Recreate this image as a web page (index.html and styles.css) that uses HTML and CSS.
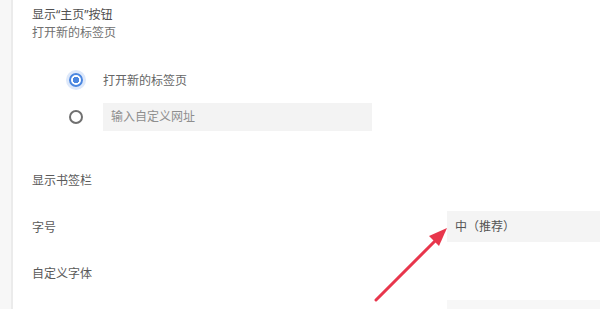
FILE: index.html
```html
<!DOCTYPE html>
<html lang="zh">
<head>
<meta charset="utf-8">
<link rel="stylesheet" href="styles.css">
</head>
<body>
<div class="page">
  <div class="gutter"></div>
  <div class="rail"></div>
  <main class="content">
    <section class="block">
      <div class="title">显示“主页”按钮</div>
      <div class="sub">打开新的标签页</div>
    </section>
    <div class="radios">
      <label class="radio-row">
        <span class="radio checked"></span>
        <span class="radio-label">打开新的标签页</span>
      </label>
      <label class="radio-row">
        <span class="radio"></span>
        <span class="input">输入自定义网址</span>
      </label>
    </div>
    <div class="row bookmarks">显示书签栏</div>
    <div class="row select-row">
      <span>字号</span>
      <span class="select">中（推荐）</span>
    </div>
    <div class="row select-row fontrow">
      <span>自定义字体</span>
    </div>
    <div class="row select-row lastrow">
      <span></span>
      <span class="select light"></span>
    </div>
  </main>
</div>
<svg class="arrow" width="615" height="309" viewBox="0 0 615 309">
  <line x1="376" y1="300" x2="436" y2="240" stroke="#e8364c" stroke-width="3" stroke-linecap="round"/>
  <polygon points="447,228 429,236 439,246" fill="#e8364c"/>
</svg>
</body>
</html>
```

FILE: styles.css
```css
html, body {
  margin: 0;
  padding: 0;
  background: #ffffff;
}
body {
  width: 615px;
  height: 309px;
  overflow: hidden;
  position: relative;
  font-family: "Noto Sans", "Noto Sans CJK SC", sans-serif;
  font-size: 12px;
  color: #5a5a5a;
}
.page {
  display: flex;
  height: 309px;
  overflow: hidden;
}
.gutter {
  width: 11px;
  background: #f7f7f7;
}
.rail {
  width: 2px;
  background: #ebebeb;
}
.content {
  flex: 1;
  padding-left: 19px;
  padding-top: 7px;
  box-sizing: border-box;
  overflow: hidden;
}
.title, .sub {
  line-height: 16px;
  height: 16px;
}
.title {
  color: #505050;
}
.sub {
  margin-top: 2px;
  color: #707070;
}
.radios {
  margin-top: 25px;
  display: flex;
  flex-direction: column;
  gap: 9px;
}
.radio-row {
  display: flex;
  align-items: center;
  height: 28px;
  padding-left: 37px;
}
.radio {
  width: 10px;
  height: 10px;
  border: 2px solid #707070;
  border-radius: 50%;
  box-sizing: content-box;
  margin-right: 20px;
  flex: none;
}
.radio.checked {
  border-color: #4a86e0;
  background: radial-gradient(circle, #4a86e0 0 3px, #ffffff 3.5px);
  box-shadow: 0 0 0 3px #dde8fa;
}
.radio-label {
  color: #666666;
}
.input {
  width: 269px;
  height: 28px;
  background: #f3f3f3;
  line-height: 28px;
  padding-left: 8px;
  box-sizing: border-box;
  color: #8e8e8e;
}
.row {
  display: flex;
  align-items: center;
  justify-content: space-between;
  height: 31px;
}
.bookmarks {
  margin-top: 33px;
}
.select-row {
  margin-top: 16px;
  padding-right: 15px;
}
.fontrow {
  margin-top: 15px;
}
.lastrow {
  margin-top: 12px;
  height: 9px;
  align-items: flex-start;
}
.select {
  width: 153px;
  height: 31px;
  background: #f4f4f4;
  line-height: 31px;
  padding-left: 8px;
  box-sizing: border-box;
  color: #555555;
}
.select.light {
  height: 9px;
  background: #f7f7f7;
}
.arrow {
  position: absolute;
  left: 0;
  top: 0;
  pointer-events: none;
}
```
